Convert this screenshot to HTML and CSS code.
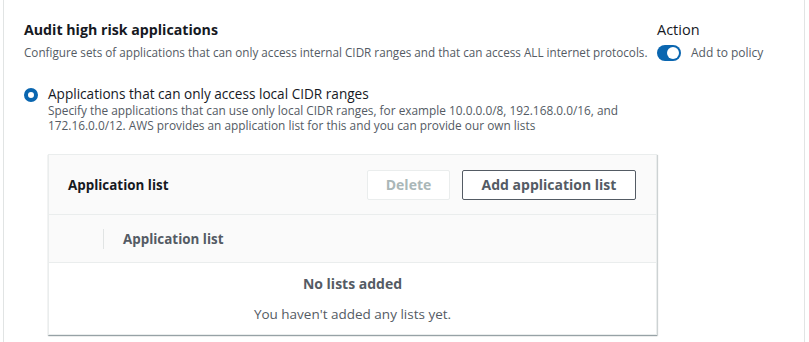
FILE: index.html
```html
<!DOCTYPE html>
<html lang="en">
<head>
    <meta charset="UTF-8">
    <meta name="viewport" content="width=device-width, initial-scale=1.0">
    <title>Audit high risk applications</title>
    <link rel="stylesheet" href="styles.css">
</head>
<body>
    <div class="panel">
        <div class="panel-header">
            <div class="header-text">
                <h2>Audit high risk applications</h2>
                <p class="desc">Configure sets of applications that can only access internal CIDR ranges and that can access ALL internet protocols.</p>
            </div>
            <div class="action">
                <div class="action-label">Action</div>
                <label class="toggle-row">
                    <span class="toggle"><span class="knob"></span></span>
                    <span class="toggle-text">Add to policy</span>
                </label>
            </div>
        </div>

        <div class="option">
            <span class="radio"></span>
            <div class="option-text">
                <div class="option-label">Applications that can only access local CIDR ranges</div>
                <p class="option-desc">Specify the applications that can use only local CIDR ranges, for example 10.0.0.0/8, 192.168.0.0/16, and 172.16.0.0/12. AWS provides an application list for this and you can provide our own lists</p>
            </div>
        </div>

        <div class="table-box">
            <div class="table-head">
                <span class="table-title">Application list</span>
                <div class="buttons">
                    <button class="btn btn-disabled" disabled>Delete</button>
                    <button class="btn">Add application list</button>
                </div>
            </div>
            <div class="col-head">
                <span class="col-divider"></span>
                <span class="col-title">Application list</span>
            </div>
            <div class="empty">
                <div class="empty-title">No lists added</div>
                <div class="empty-text">You haven't added any lists yet.</div>
            </div>
        </div>
    </div>
</body>
</html>
```

FILE: styles.css
```css
body {
    margin: 0;
    font-family: "Open Sans", Arial, sans-serif;
    background-color: white;
    color: #16191f;
}
.panel {
    margin-left: 3px;
    width: 802px;
    height: 342px;
    border-left: 1px solid #e1e4e4;
    border-right: 1px solid #e1e4e4;
    padding: 19px 0 0 20px;
    box-sizing: border-box;
}
.panel-header {
    display: flex;
}
.header-text {
    width: 633px;
    flex: none;
}
h2 {
    margin: 0;
    font-size: 14.2px;
    line-height: 22px;
    font-weight: 700;
}
.desc {
    margin: 3px 0 0;
    font-size: 11.7px;
    line-height: 16px;
    color: #545b64;
    white-space: nowrap;
}
.action {
    flex: none;
    white-space: nowrap;
}
.action-label {
    font-size: 14.5px;
    line-height: 22px;
}
.toggle-row {
    display: flex;
    align-items: center;
    margin-top: 4px;
}
.toggle {
    width: 24px;
    height: 16px;
    border-radius: 8px;
    background-color: #0a66b0;
    position: relative;
    margin-right: 10px;
}
.knob {
    position: absolute;
    top: 2px;
    right: 2px;
    width: 12px;
    height: 12px;
    border-radius: 50%;
    background-color: white;
}
.toggle-text {
    font-size: 12px;
    line-height: 16px;
    color: #545b64;
}
.option {
    display: flex;
    margin-top: 24px;
}
.radio {
    width: 6px;
    height: 6px;
    border: 4px solid #0a66b0;
    border-radius: 50%;
    margin: 3px 10px 0 0;
    flex-shrink: 0;
}
.option-label {
    font-size: 13.6px;
    line-height: 18px;
}
.option-desc {
    margin: 0;
    font-size: 11.85px;
    line-height: 15px;
    color: #545b64;
    width: 600px;
}
.table-box {
    margin: 21px 0 0 24px;
    width: 607px;
    border: 1px solid #eaeded;
    box-shadow: 0 1px 1px rgba(0,28,36,0.3), 1px 1px 1px rgba(0,28,36,0.15);
}
.table-head {
    display: flex;
    align-items: center;
    justify-content: space-between;
    height: 59px;
    padding: 0 20px 0 19px;
    background-color: #fafafa;
    border-bottom: 1px solid #eaeded;
}
.table-title {
    font-size: 13.4px;
    font-weight: 700;
}
.buttons {
    display: flex;
    gap: 12px;
}
.btn {
    font-family: "Open Sans", Arial, sans-serif;
    font-size: 14px;
    font-weight: 700;
    color: #545b64;
    background-color: white;
    border: 1px solid #545b64;
    border-radius: 2px;
    height: 30px;
    width: 174px;
    padding: 0;
}
.btn-disabled {
    color: #aab7b8;
    border-color: #eaeded;
    width: 83px;
}
.col-head {
    display: flex;
    align-items: center;
    height: 47px;
    background-color: #fafafa;
    border-bottom: 1px solid #eaeded;
    padding-left: 54px;
}
.col-divider {
    width: 1px;
    height: 20px;
    background-color: #e1e4e4;
    margin-right: 19px;
}
.col-title {
    font-size: 13.4px;
    font-weight: 700;
    color: #545b64;
}
.empty {
    text-align: center;
    color: #545b64;
    padding: 11px 0 10px;
}
.empty-title {
    font-size: 14px;
    font-weight: 700;
    line-height: 20px;
}
.empty-text {
    margin-top: 10px;
    font-size: 13.5px;
    line-height: 20px;
}
```
